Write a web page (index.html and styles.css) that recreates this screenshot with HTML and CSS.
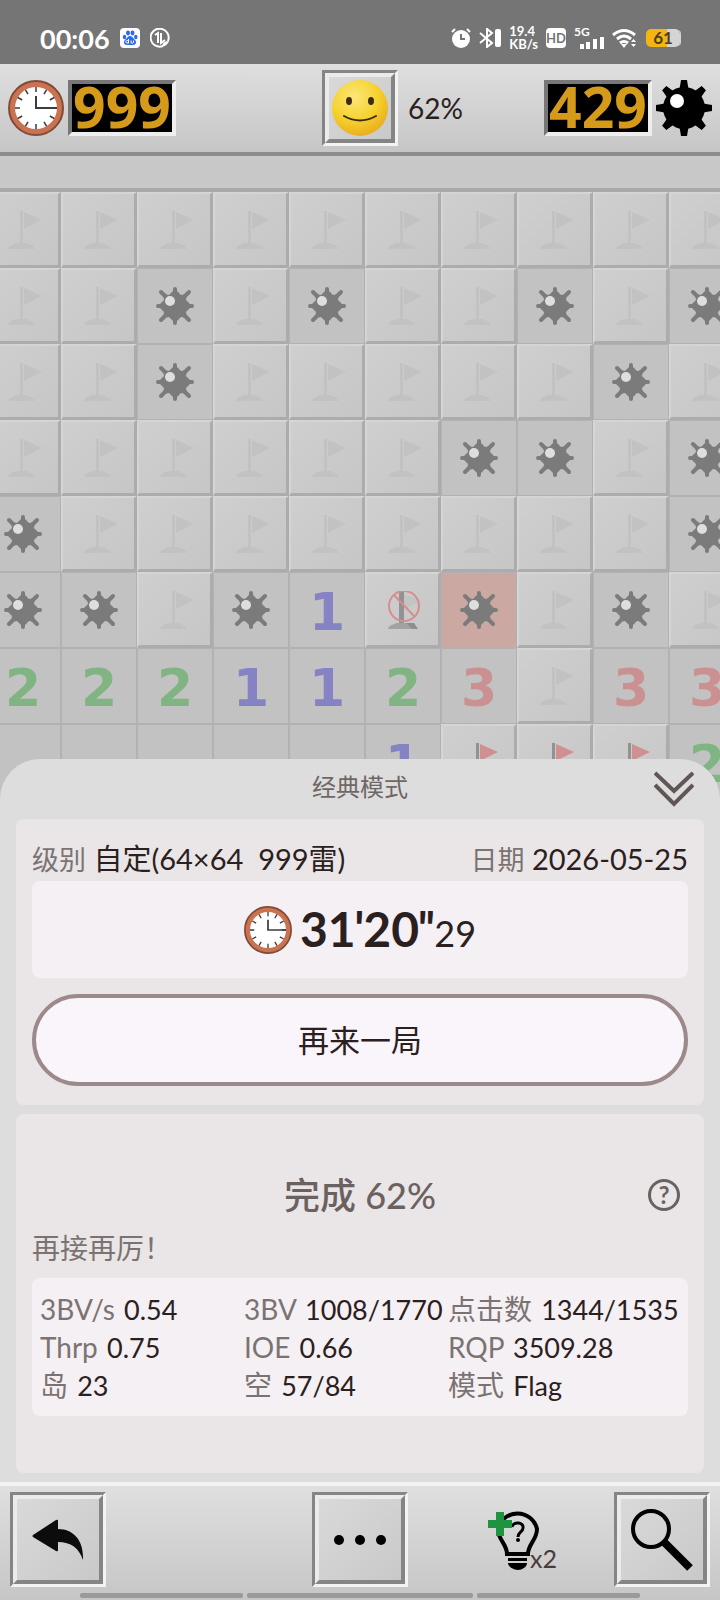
FILE: index.html
```
<!DOCTYPE html>
<html lang="zh-CN">

<head>
  <meta charset="UTF-8">
  <meta name="viewport" content="width=device-width, initial-scale=1">
  <title>扫雷 - 经典模式</title>
  <link rel="stylesheet" href="styles.css">
</head>

<body>
  <!-- shared icons -->
  <svg class="sprite" width="0" height="0" aria-hidden="true">
    <symbol id="mine" viewBox="0 0 56 56">
      <g fill="#000">
        <circle cx="28" cy="28" r="21" />
        <path id="spike" d="M25 0h6l2 12H23z M25 56h6l2-12H23z M0 25v6l12 2V23z M56 25v6l-12 2V23z" />
        <use href="#spike" transform="rotate(45 28 28)" />
      </g>
      <circle cx="21" cy="21" r="7" fill="#fff" />
    </symbol>
    <symbol id="cellmine" viewBox="0 0 38 38">
      <g fill="none" stroke="currentColor" stroke-width="4" stroke-linecap="round">
        <path d="M19 2v34M2 19h34M5 5l28 28M33 5L5 33" />
      </g>
      <path d="M17 4h4l4 4 6-1-1 6 4 4v4l-4 4 1 6-6-1-4 4h-4l-4-4-6 1 1-6-4-4v-4l4-4-1-6 6 1z" fill="currentColor" />
      <circle cx="14" cy="14" r="5" fill="#dedede" />
    </symbol>
    <symbol id="flag" viewBox="0 0 38 38">
      <path d="M16 0h3v32h-3z" fill="var(--pole)" />
      <path d="M20 1l18 8-18 9z" fill="var(--cloth)" />
      <path d="M4 38c1-4 5-4 8-6h11c2 2 6 2 8 6z" fill="var(--pole)" />
    </symbol>
    <symbol id="wrong" viewBox="0 0 38 38">
      <path d="M15 1h5v31h-5z" fill="#929292" />
      <path d="M4 38c1-4 5-4 8-6h13c2 2 6 2 8 6z" fill="#a2a2a2" />
      <path d="M22 32l8 0 4 6h-6z" fill="#8e8e8e" />
      <path d="M20 3l18 7-18 8z" fill="#b9b9b9" opacity="0.4" />
      <g fill="none" stroke="#d88d8d" stroke-width="2">
        <circle cx="20" cy="15" r="15" />
        <path d="M10 4l21 22" />
      </g>
    </symbol>
    <symbol id="clock" viewBox="0 0 56 56">
      <circle cx="28" cy="28" r="27" fill="#cb7250" stroke="#804c3a" stroke-width="2" />
      <circle cx="28" cy="28" r="21" fill="#fff" />
      <g stroke="#3c3c3c" stroke-width="1.5" fill="none">
        <path id="tick" d="M28 7v5M28 44v5M7 28h5M44 28h5" />
        <use href="#tick" transform="rotate(30 28 28)" />
        <use href="#tick" transform="rotate(60 28 28)" />
        <path d="M28 16v12h21" stroke-width="2" />
      </g>
    </symbol>
  </svg>

  <div class="status">
    <span class="time">00:06</span>
    <svg width="20" height="20" viewBox="0 0 20 20">
      <rect width="20" height="20" rx="4" fill="#fff" />
      <g fill="#2f6be8">
        <ellipse cx="8" cy="5" rx="2" ry="2.4" />
        <ellipse cx="12.5" cy="5" rx="2" ry="2.4" />
        <ellipse cx="4.5" cy="9" rx="1.7" ry="2.2" />
        <ellipse cx="15.8" cy="9" rx="1.7" ry="2.2" />
        <path d="M10 8c2 0 3 2 5 4s1 5-2 5H7c-3 0-4-3-2-5s3-4 5-4z" />
      </g>
      <path d="M8.5 11v4.5M8.500 13.500a1.300 1.300 0 1 0 0 .5M11 12.500v2q1 1.500 2.500 0v-2" fill="none" stroke="#fff" />
    </svg>
    <svg width="20" height="20" viewBox="0 0 20 20" fill="none" stroke="#fff" stroke-width="2">
      <path d="M18 13a9 9 0 1 0-5 5" />
      <path d="M5 7l3-2v10M11 5v10l4-3" />
      <path d="M12 19c0-4 3-6 7-6-1 3-3 5-7 6z" fill="#fff" stroke="none" />
    </svg>

    <div class="status-right">
      <svg width="20" height="20" viewBox="0 0 20 20">
        <circle cx="10" cy="11" r="9" fill="#fff" />
        <path d="M1 4l3-3M19 4l-3-3" stroke="#fff" stroke-width="2" />
        <path d="M10 6v5h4" fill="none" stroke="#757575" stroke-width="2" />
      </svg>
      <svg width="22" height="20" viewBox="0 0 22 20">
        <path d="M1 5l12 10-5 4V1l5 4L1 15" fill="none" stroke="#fff" stroke-width="2" />
        <rect x="16" y="1" width="6" height="18" rx="2" fill="#fff" />
      </svg>
      <span class="speed">19.4<br>KB/s</span>
      <span class="hd">HD</span>
      <div class="signal">
        <span>5G</span>
        <svg width="24" height="12" viewBox="0 0 24 12" fill="#fff">
          <path d="M0 7h4v5H0zM6 5h4v7H6zM13 2h4v10h-4zM20 0h4v12h-4z" />
        </svg>
      </div>
      <svg width="26" height="20" viewBox="0 0 26 20">
        <path d="M1 7q11-9 22 0M5 11q7-6 14 0M8 15q4-3 8 0" fill="none" stroke="#fff" stroke-width="3" />
        <path d="M12 20l-3-4h6zM19 14l2.500-3 2.500 3zM19 16l2.500 3 2.500-3z" fill="#fff" />
      </svg>
      <span class="battery">61</span>
    </div>
  </div>

  <header class="topbar">
    <div class="counter">
      <svg width="56" height="56"><use href="#clock" /></svg>
      <span class="lcd">999</span>
    </div>
    <button class="key face" aria-label="重新开始">
      <svg width="58" height="58" viewBox="0 0 58 58">
        <defs>
          <radialGradient id="skin" cx="40%" cy="30%" r="70%">
            <stop offset="0" stop-color="#fbe679" />
            <stop offset="0.6" stop-color="#f6d22f" />
            <stop offset="1" stop-color="#e9b01f" />
          </radialGradient>
        </defs>
        <circle cx="29" cy="29" r="28" fill="url(#skin)" />
        <ellipse cx="18" cy="22" rx="3" ry="4" fill="#3b2a18" />
        <ellipse cx="40" cy="22" rx="3" ry="4" fill="#3b2a18" />
        <path d="M13 37q16 9 32 0" fill="none" stroke="#3b2a18" stroke-width="2" stroke-linecap="round" />
      </svg>
    </button>
    <div class="topbar-right">
      <span class="percent">62%</span>
      <div class="counter">
        <span class="lcd">429</span>
        <svg width="56" height="56"><use href="#mine" /></svg>
      </div>
    </div>
  </header>

  <div class="board" id="board"></div>

  <main class="sheet">
    <div class="sheet-head">
      <h1>经典模式</h1>
      <button class="collapse" aria-label="收起">
        <svg width="40" height="36" viewBox="0 0 40 36" fill="none" stroke="#5f5655" stroke-width="4">
          <path d="M1 2l19 18L39 2M1 14l19 19 19-19" />
        </svg>
      </button>
    </div>

    <section class="card">
      <div class="meta">
        <div><span class="label">级别</span> <span class="value">自定(64×64&nbsp; 999雷)</span></div>
        <div><span class="label">日期</span> <span class="value">2026-05-25</span></div>
      </div>
      <div class="result">
        <svg width="48" height="48"><use href="#clock" /></svg>
        <span class="clocktime">31<span class="prime">′</span>20<span class="prime">″</span><small>29</small></span>
      </div>
      <button class="again">再来一局</button>
    </section>

    <section class="card summary">
      <div class="done">
        <h2>完成 62%</h2>
        <button class="help" aria-label="帮助">?</button>
      </div>
      <p class="cheer">再接再厉！</p>
      <div class="stats">
        <div><span class="label">3BV/s</span> <span class="value">0.54</span></div>
        <div><span class="label">3BV</span> <span class="value">1008/1770</span></div>
        <div><span class="label">点击数</span> <span class="value">1344/1535</span></div>
        <div><span class="label">Thrp</span> <span class="value">0.75</span></div>
        <div><span class="label">IOE</span> <span class="value">0.66</span></div>
        <div><span class="label">RQP</span> <span class="value">3509.28</span></div>
        <div><span class="label">岛</span> <span class="value">23</span></div>
        <div><span class="label">空</span> <span class="value">57/84</span></div>
        <div><span class="label">模式</span> <span class="value">Flag</span></div>
      </div>
    </section>
  </main>

  <footer class="toolbar">
    <div class="tools">
      <button class="key back" aria-label="返回">
        <svg width="52" height="42" viewBox="0 0 52 42" fill="#0c0c0c">
          <path d="M1 16L24 1q2-1 2 1v8c16 0 26 12 25 31-4-12-12-18-25-18v8q0 2-2 1L1 18q-1-1 0-2z" />
        </svg>
      </button>
      <button class="key more" aria-label="更多">
        <svg width="52" height="10" viewBox="0 0 52 10">
          <circle cx="5" cy="5" r="5" /><circle cx="26" cy="5" r="5" /><circle cx="47" cy="5" r="5" />
        </svg>
      </button>
      <button class="hint" aria-label="提示">
        <svg width="52" height="62" viewBox="0 0 52 62">
          <path d="M19 45c0-10-9-14-9-25a20 20 0 0 1 39 0c0 11-9 15-9 25z" fill="none" stroke="#000" stroke-width="4" />
          <path d="M20 49h19v3H20zM20 54h19c0 4-5 7-9 7s-10-3-10-7z" />
          <path d="M24 18c1-6 12-5 11 1 0 4-5 4-5 9" fill="none" stroke="#000" stroke-width="3" />
          <circle cx="30" cy="31" r="2" />
          <path d="M8 3h8v8h8v8h-8v8H8v-8H0v-8h8z" fill="#1f9440" />
        </svg>
        <span>x2</span>
      </button>
      <button class="key search" aria-label="放大">
        <svg width="62" height="62" viewBox="0 0 62 62" fill="none" stroke="#000">
          <circle cx="20" cy="20" r="18" stroke-width="4" />
          <path d="M33 33l26 26" stroke-width="8" />
        </svg>
      </button>
    </div>
    <div class="nav"><i></i><i></i><i></i></div>
  </footer>

  <script src="board.js"></script>
</body>

</html>
```
FILE: styles.css
```
* {
  box-sizing: border-box;
}

body {
  margin: 0;
  min-height: 100vh;
  display: flex;
  flex-direction: column;
  overflow-x: hidden;
  background: #dcdddc;
  color: #2b2020;
  font-family: Lato, "Noto Sans CJK SC", sans-serif;
  font-size: 28px;
}

button {
  margin: 0;
  padding: 0;
  border: none;
  background: none;
  font: inherit;
  color: inherit;
  cursor: pointer;
}

h1,
h2,
p {
  margin: 0;
  font-weight: normal;
}

svg {
  display: block;
  flex: none;
}

.sprite {
  position: absolute;
}

/* status bar */

.status {
  height: 64px;
  padding: 12px 40px 0;
  display: flex;
  align-items: center;
  gap: 10px;
  background: #757575;
  color: #fff;
}

.time {
  font-size: 27px;
  font-weight: bold;
}

.status-right {
  margin-left: auto;
  display: flex;
  align-items: center;
  gap: 8px;
}

.speed {
  font-size: 13px;
  line-height: 13px;
  font-weight: bold;
}

.hd {
  width: 20px;
  border-radius: 4px;
  background: #fff;
  color: #757575;
  font-size: 13px;
  line-height: 20px;
  font-weight: bold;
  text-align: center;
}

.signal {
  font-size: 12px;
  line-height: 10px;
  font-weight: bold;
}

.signal svg {
  margin-left: 6px;
}

.signal span {
  display: block;
}

.battery {
  width: 34px;
  border-radius: 5px;
  background: linear-gradient(90deg, #f5b511 61%, #d4d4d4 61%);
  box-shadow: 2px 0 0 -1px #d4d4d4;
  color: #4b3c20;
  font-size: 17px;
  line-height: 18px;
  font-weight: bold;
  text-align: center;
}

/* raised key */

.key {
  position: relative;
  display: flex;
  align-items: center;
  justify-content: center;
  border: 3px solid;
  border-color: #858585 #f3f3f3 #f3f3f3 #858585;
  background: linear-gradient(135deg, #dadada, #c8c8c8);
}

.key::before {
  content: "";
  position: absolute;
  inset: 0;
  border: 4px solid;
  border-color: #ebebeb #858585 #858585 #ebebeb;
}

/* top bar */

.topbar {
  height: 92px;
  padding: 0 8px;
  display: grid;
  grid-template-columns: 1fr 76px 1fr;
  align-items: center;
  border-bottom: 4px solid #8d8d8d;
  background: linear-gradient(#dfdfdf, #c6c6c6);
}

.face {
  height: 76px;
}

.counter {
  display: flex;
  align-items: center;
  gap: 4px;
}

.lcd {
  width: 108px;
  height: 56px;
  border: 4px solid;
  border-color: #777 #eee #eee #777;
  background: #000;
  color: #d59a19;
  font-family: "Noto Sans", sans-serif;
  font-size: 57px;
  font-weight: bold;
  line-height: 44px;
  text-align: center;
}

.topbar-right {
  padding-left: 10px;
  display: flex;
  align-items: center;
  justify-content: space-between;
}

.percent {
  line-height: 32px;
}

/* board, the left column is partly scrolled away */

.board {
  margin-left: -15px;
  padding-top: 36px;
  display: grid;
  grid-template-columns: repeat(10, 76px);
  grid-auto-rows: 76px;
  background: linear-gradient(#c8c8c8 32px, #a9a9a9 32px);
}

.cell {
  display: flex;
  align-items: center;
  justify-content: center;
  border: 1px solid #b2b2b2;
  background: #c2c2c2;
  color: #7b7b7b;
}

.closed {
  border-width: 2px 3px 3px 2px;
  border-color: #d5d5d5 #acacac #acacac #d5d5d5;
  background: linear-gradient(135deg, #cfcfcf, #c6c6c6);
  --pole: #c2c2c2;
  --cloth: #c2c2c2;
}

.flagged {
  --pole: #929292;
  --cloth: #d08f90;
}

.boom {
  background: #cba8a1;
}

.num {
  font-family: "DejaVu Sans", sans-serif;
  font-size: 52px;
  font-weight: bold;
  line-height: 60px;
  padding-top: 3px;
}

.n1 {
  color: #8583c4;
}

.n2 {
  color: #80b482;
}

.n3 {
  color: #cb9091;
}

/* result sheet */

.sheet {
  position: relative;
  flex: 1;
  margin-top: -41px;
  padding: 0 16px 9px;
  display: flex;
  flex-direction: column;
  gap: 9px;
  border-radius: 40px 40px 0 0;
  background: #dcdddc;
}

.sheet-head {
  height: 51px;
  padding: 8px 10px 0;
  display: grid;
  grid-template-columns: 40px 1fr 40px;
  align-items: center;
}

.sheet-head h1 {
  grid-column: 2;
  font-size: 24px;
  line-height: 28px;
  padding-bottom: 4px;
  text-align: center;
  color: #6f6665;
}

.card {
  padding: 20px 16px 19px;
  border-radius: 8px;
  background: #eae6e7;
}

.meta {
  height: 42px;
  display: flex;
  justify-content: space-between;
  font-size: 29px;
  line-height: 40px;
}

.label {
  font-size: 28px;
  color: #7b7372;
}

.meta .label {
  font-size: 27px;
}

.result {
  height: 97px;
  display: flex;
  align-items: center;
  justify-content: center;
  gap: 8px;
  border-radius: 8px;
  background: #f5f0f4;
}

.clocktime {
  font-size: 48px;
  font-weight: bold;
}

.clocktime small {
  font-size: 36px;
  font-weight: normal;
}

.prime {
  font-family: Roboto, sans-serif;
}

.again {
  width: 100%;
  height: 92px;
  margin-top: 16px;
  padding-bottom: 4px;
  border: 4px solid #9b8a89;
  border-radius: 46px;
  background: #faf5fa;
  font-size: 31px;
}

.summary {
  flex: 1;
  padding-top: 54px;
}

.done {
  height: 54px;
  padding: 0 8px;
  display: grid;
  grid-template-columns: 32px 1fr 32px;
  align-items: center;
}

.done h2 {
  grid-column: 2;
  font-size: 36px;
  font-weight: 500;
  line-height: 48px;
  text-align: center;
  color: #6b6160;
}

.help {
  height: 32px;
  border: 3px solid #6a6260;
  border-radius: 50%;
  color: #6a6260;
  font-size: 24px;
  font-weight: bold;
  line-height: 24px;
}

.cheer {
  height: 56px;
  font-size: 28px;
  line-height: 52px;
  color: #7b7372;
}

.stats {
  padding: 12px 8px;
  display: grid;
  grid-template-columns: 204px 204px 1fr;
  grid-auto-rows: 38px;
  line-height: 38px;
  white-space: nowrap;
  border-radius: 8px;
  background: #f5f0f4;
}

.stats .value {
  margin-left: 2px;
  font-size: 27px;
}

/* bottom bar */

.toolbar {
  height: 118px;
  border-top: 4px solid #f2f2f2;
  background: linear-gradient(#dfdfdf, #c6c6c6);
}

.tools {
  padding: 6px 10px;
  display: grid;
  grid-template-columns: repeat(5, 96px);
  grid-auto-rows: 95px;
  justify-content: space-between;
}

.more {
  grid-column: 3;
}

.hint {
  display: flex;
  align-items: center;
  justify-content: flex-end;
}

.hint span {
  align-self: flex-end;
  margin: 0 2px 14px -10px;
  font-size: 25px;
  color: #4a3c3a;
}

.nav {
  padding: 0 80px;
  display: grid;
  grid-template-columns: 163fr 226fr 163fr;
  gap: 4px;
}

.nav i {
  height: 5px;
  border-radius: 2px;
  background: #9a9a9a;
}
```
FILE: board.js
```
// . closed, F flagged, * mine, X the mine that was hit, w wrong flag, 0-8 open
var rows = [
  '..........',
  '..*.*..*.*',
  '..*.....*.',
  '......**.*',
  '*........*',
  '**.*1wX.*.',
  '2221123.33',
  '000001FFF2'
];

function icon(id) {
  return '<svg width="38" height="38"><use href="#' + id + '"/></svg>';
}

function cell(c) {
  if (c === '.') return '<div class="cell closed">' + icon('flag') + '</div>';
  if (c === 'F') return '<div class="cell closed flagged">' + icon('flag') + '</div>';
  if (c === 'w') return '<div class="cell closed">' + icon('wrong') + '</div>';
  if (c === '*') return '<div class="cell">' + icon('cellmine') + '</div>';
  if (c === 'X') return '<div class="cell boom">' + icon('cellmine') + '</div>';
  if (c === '0') return '<div class="cell"></div>';
  return '<div class="cell num n' + c + '">' + c + '</div>';
}

document.getElementById('board').innerHTML = rows.join('').split('').map(cell).join('');
```
